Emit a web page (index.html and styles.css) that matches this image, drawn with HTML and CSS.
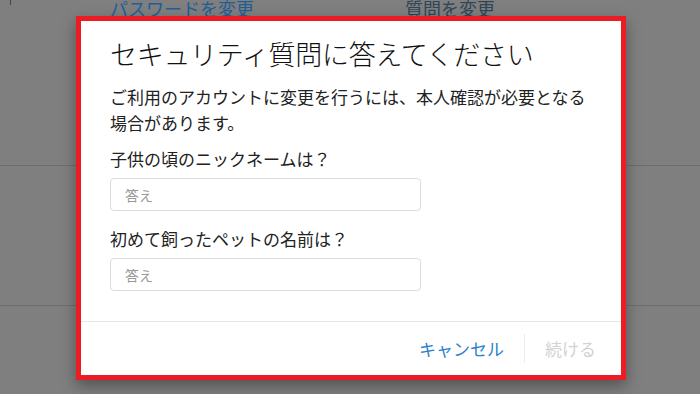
FILE: index.html
```html
<!DOCTYPE html>
<html lang="ja">
<head>
<title>セキュリティ質問</title>
<meta name="viewport" content="width=device-width, initial-scale=1.0">
<link rel="stylesheet" href="styles.css">
</head>
<body>
<div class="pagina">
    <div class="marca"></div>
    <div class="enlaces">
        <span class="enlace">パスワードを変更</span>
        <span class="enlace oscuro">質問を変更</span>
    </div>
    <div class="linea linea-1"></div>
    <div class="linea linea-2"></div>
</div>

<div class="modal">
    <div class="modal-cuerpo">
        <h1 class="titulo">セキュリティ質問に答えてください</h1>
        <p class="texto">ご利用のアカウントに変更を行うには、本人確認が必要となる場合があります。</p>

        <label class="pregunta">子供の頃のニックネームは？</label>
        <input class="respuesta" type="text" placeholder="答え">

        <label class="pregunta">初めて飼ったペットの名前は？</label>
        <input class="respuesta" type="text" placeholder="答え">
    </div>
    <div class="modal-pie">
        <span class="boton">キャンセル</span>
        <span class="separador"></span>
        <span class="boton apagado">続ける</span>
    </div>
</div>
</body>
</html>
```

FILE: styles.css
```css
body {
    margin: 0;
    height: 394px;
    overflow: hidden;
    background: #7f7f7f;
    font-family: "Noto Sans CJK JP", "Noto Sans", sans-serif;
    color: #111;
}

.pagina {
    display: flex;
    flex-direction: column;
}

.marca {
    width: 1px;
    height: 5px;
    margin-left: 10px;
    background: #444;
}

.enlaces {
    display: flex;
    margin-top: -10px;
    padding-left: 110px;
    font-size: 18px;
    line-height: 26px;
}

.enlace {
    width: 322px;
    color: #1f5e96;
}

.enlace.oscuro {
    color: #2e4658;
}

.linea {
    height: 1px;
    background: #6d6d6d;
}

.linea-1 {
    margin-top: 144px;
}

.linea-2 {
    margin-top: 139px;
}

.modal {
    position: absolute;
    left: 76px;
    top: 16px;
    width: 540px;
    border: 5px solid #ec1c24;
    background: #fff;
    box-shadow: 0 6px 14px rgba(0, 0, 0, 0.35);
}

.modal-cuerpo {
    display: flex;
    flex-direction: column;
    align-items: flex-start;
    padding: 15px 28px 30px 29px;
}

.titulo {
    margin: 0;
    font-size: 27px;
    font-weight: 300;
    line-height: 36px;
    letter-spacing: -0.3px;
}

.texto {
    margin: 12px 0 0;
    font-size: 17px;
    line-height: 26px;
    color: #222;
}

.pregunta {
    margin-top: 11px;
    margin-bottom: 7px;
    font-size: 17px;
    line-height: 24px;
    color: #222;
}

.pregunta + .respuesta + .pregunta {
    margin-top: 16px;
}

.respuesta {
    box-sizing: border-box;
    width: 311px;
    height: 33px;
    padding: 0 14px;
    border: 1px solid #dcdcdc;
    border-radius: 4px;
    font-family: inherit;
    font-size: 14px;
    color: #333;
    outline: none;
}

.respuesta::placeholder {
    color: #9a9a9a;
}

.modal-pie {
    display: flex;
    align-items: center;
    justify-content: flex-end;
    height: 53px;
    padding-right: 25px;
    border-top: 1px solid #e6e6e6;
}

.boton {
    font-size: 17px;
    color: #2b7fcb;
    cursor: pointer;
}

.boton.apagado {
    color: #d2d2d2;
}

.separador {
    width: 1px;
    height: 29px;
    margin: 0 20px;
    background: #ececec;
}
```
